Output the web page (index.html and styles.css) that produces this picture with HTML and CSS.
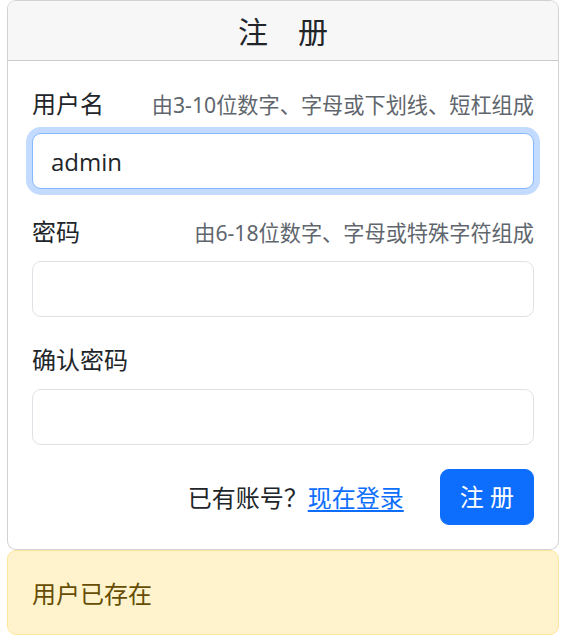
FILE: index.html
```html
<!DOCTYPE html>
<html lang="zh-CN">
<head>
<meta charset="utf-8">
<title>注册</title>
<link rel="stylesheet" href="styles.css">
</head>
<body>
<div class="page">
  <div class="card">
    <div class="card-header">注　册</div>
    <form class="card-body">
      <div class="field">
        <div class="label-row">
          <label class="label" for="username">用户名</label>
          <span class="hint">由3-10位数字、字母或下划线、短杠组成</span>
        </div>
        <input id="username" class="input is-focused" type="text" value="admin">
      </div>
      <div class="field">
        <div class="label-row">
          <label class="label" for="password">密码</label>
          <span class="hint">由6-18位数字、字母或特殊字符组成</span>
        </div>
        <input id="password" class="input" type="password">
      </div>
      <div class="field">
        <div class="label-row">
          <label class="label" for="confirm">确认密码</label>
        </div>
        <input id="confirm" class="input" type="password">
      </div>
      <div class="actions">
        <span class="login-text">已有账号？<a class="link" href="#">现在登录</a></span>
        <button class="btn" type="button">注 册</button>
      </div>
    </form>
  </div>
  <div class="alert">用户已存在</div>
</div>
</body>
</html>
```
FILE: styles.css
```css
* { box-sizing: border-box; }
html, body { margin: 0; padding: 0; background: #fff; }
body {
  font-family: "Noto Sans", "Noto Sans CJK SC", sans-serif;
  font-size: 24px;
  line-height: 1.5;
  color: #212529;
}
.page {
  width: 552px;
  margin-left: 7px;
}
.card {
  border: 1px solid rgba(0,0,0,.175);
  border-radius: 9px;
  background: #fff;
  overflow: hidden;
}
.card-header {
  background: #f7f7f7;
  border-bottom: 1px solid rgba(0,0,0,.175);
  padding: 12px 24px;
  font-size: 30px;
  line-height: 35px;
  text-align: center;
  font-family: "Noto Sans CJK SC", sans-serif;
}
.card-body {
  padding: 24px;
  margin: 0;
  display: flex;
  flex-direction: column;
  gap: 24px;
}
.field { display: flex; flex-direction: column; gap: 12px; }
.label-row {
  display: flex;
  justify-content: space-between;
  align-items: baseline;
  height: 36px;
}
.label {
  font-size: 24px;
  line-height: 36px;
  font-family: "Noto Sans CJK SC", sans-serif;
}
.hint {
  font-size: 21.2px;
  line-height: 36px;
  color: #5f666d;
}
.input {
  display: block;
  width: 100%;
  height: 56px;
  padding: 9px 18px;
  font-family: "Open Sans", "Noto Sans CJK SC", sans-serif;
  font-size: 24px;
  line-height: 36px;
  color: #212529;
  background: #fff;
  border: 1px solid #dee2e6;
  border-radius: 9px;
  outline: none;
}
.input.is-focused {
  border-color: #86b7fe;
  box-shadow: 0 0 0 6px rgba(13,110,253,.25);
}
.actions {
  display: flex;
  justify-content: flex-end;
  align-items: center;
  gap: 36px;
}
.login-text {
  font-family: "Noto Sans CJK SC", sans-serif;
  font-size: 24px;
  line-height: 36px;
}
.link { color: #0d6efd; text-decoration: underline; text-underline-offset: 3px; }
.btn {
  height: 56px;
  padding: 9px 19px;
  font-family: "Noto Sans", "Noto Sans CJK SC", sans-serif;
  font-size: 24px;
  line-height: 36px;
  color: #fff;
  background: #0d6efd;
  border: 1px solid #0d6efd;
  border-radius: 9px;
}
.alert {
  padding: 24px;
  background: #fff3cd;
  border: 1px solid #ffe69c;
  border-radius: 9px;
  color: #664d03;
  font-family: "Noto Sans CJK SC", sans-serif;
  font-size: 24px;
  line-height: 35px;
}
```
